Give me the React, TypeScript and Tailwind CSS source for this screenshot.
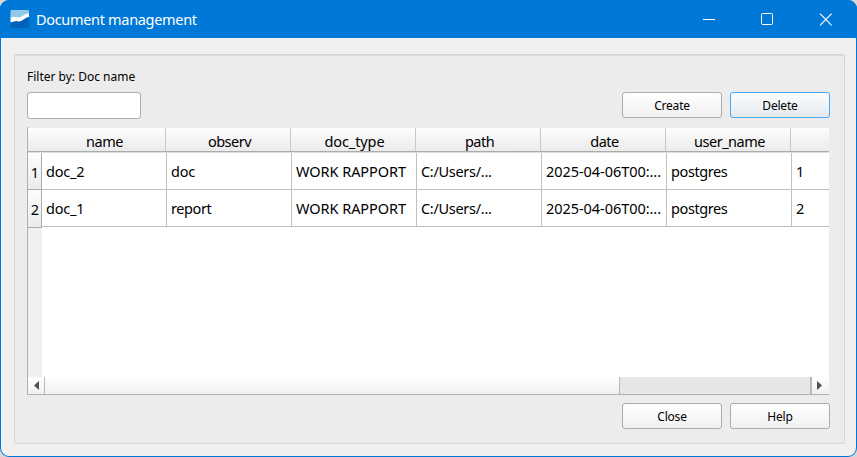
import React from "react";

const columns = ["name", "observ", "doc_type", "path", "date", "user_name"];

const rows = [
  ["doc_2", "doc", "WORK RAPPORT", "C:/Users/...", "2025-04-06T00:...", "postgres", "1"],
  ["doc_1", "report", "WORK RAPPORT", "C:/Users/...", "2025-04-06T00:...", "postgres", "2"],
];

const tracking: Record<string, string> = {
  "WORK RAPPORT": "tracking-[-0.05px]",
  "2025-04-06T00:...": "tracking-[-0.05px]",
  "C:/Users/...": "tracking-[-0.3px]",
  doc_type: "tracking-[-0.1px]",
  doc_2: "tracking-[-0.2px]",
  doc_1: "tracking-[-0.2px]",
  doc: "tracking-[-0.2px]",
};

function DialogButton({ label, active = false }: { label: string; active?: boolean }) {
  return (
    <button
      className={`h-[26px] w-[100px] rounded-[3px] border pt-px text-center text-[12px] leading-[24px] tracking-[-0.2px] text-black ${
        active
          ? "border-[#45a9f7] bg-linear-to-b from-[#fdfdfd] to-[#e2e9ef]"
          : "border-[#adadad] bg-linear-to-b from-white to-[#f0f0f0]"
      }`}
    >
      {label}
    </button>
  );
}

function TitleBar() {
  return (
    <header className="flex h-[38px] shrink-0 items-center bg-[#0078d7] pl-[10px] text-white">
      <svg width="19" height="18" viewBox="0 0 19 18" className="mb-[1px]">
        <rect x="0.5" width="18.5" height="18" rx="1" fill="#0063b9" />
        <path d="M1.5 0H18Q19 0 19 1V6H0.5V12V1Q0.5 0 1.5 0Z" fill="#91c9e9" />
        <path d="M0.5 5H19V6L10 9L0.5 8Z" fill="#91c9e9" />
        <path d="M0.5 7.5Q4 6.3 7 7.3C11 8.3 13 4 19 3.2V7C15 7.5 13 11 9 11.5Q6 10.5 4 11.5Q2 12.5 0.5 12Z" fill="#fff" />
      </svg>
      <h1 className="ml-[7px] text-[14.5px] leading-[20px] tracking-[-0.32px]">Document management</h1>
      <div className="mr-[25px] ml-auto flex items-center">
        <svg width="12" height="13" viewBox="0 0 12 13" fill="none" stroke="white">
          <path d="M0 6.5H12" />
        </svg>
        <svg width="12" height="12" viewBox="0 0 12 12" fill="none" stroke="white" className="ml-[46px]">
          <rect x="0.5" y="0.5" width="11" height="11" rx="1" />
        </svg>
        <svg width="13" height="13" viewBox="0 0 13 13" fill="none" stroke="white" strokeWidth="1.1" className="ml-[46px]">
          <path d="M1 0.7L12.6 12.3M12.6 0.7L1 12.3" />
        </svg>
      </div>
    </header>
  );
}

function DocumentTable() {
  return (
    <div className="flex h-[268px] w-[802px] flex-col overflow-hidden border-b border-l border-[#b0b0b0] bg-white pt-px text-[14.5px] text-black shadow-[inset_0_1px_0_#ececec]">
      <div className="flex h-[24px] shrink-0 border-b border-[#ababab] bg-linear-to-b from-[#fdfdfd] to-[#ebebeb]">
        <div className="w-[13px] shrink-0" />
        {columns.map((column) => (
          <div
            key={column}
            className={`h-[23px] w-[125px] shrink-0 border-r border-[#c8c8c8] pl-[3px] text-center leading-[27px] ${tracking[column] ?? "tracking-[-0.5px]"}`}
          >
            {column}
          </div>
        ))}
      </div>
      <div className="h-px shrink-0 bg-[#dedede]" />
      <div className="flex h-[224px] shrink-0">
        <div className="w-[14px] shrink-0 bg-[#f0f0f0]">
          {rows.map((row, index) => (
            <div
              key={row[0]}
              className={`${index === 0 ? "h-[37px]" : "h-[38px]"} border-r border-b border-[#ababab] bg-linear-to-b from-[#fdfdfd] to-[#ebebeb] pl-px text-center leading-[39px]`}
            >
              {index + 1}
            </div>
          ))}
        </div>
        <div className="grow overflow-hidden">
          {rows.map((row) => (
            <div key={row[0]} className="flex h-[37px] border-b border-[#c0c0c0]">
              {row.map((cell, index) => (
                <div
                  key={index}
                  className={`h-[36px] w-[125px] shrink-0 border-r border-[#c0c0c0] pl-[4px] leading-[37px] whitespace-nowrap ${tracking[cell] ?? "tracking-[-0.4px]"}`}
                >
                  {cell}
                </div>
              ))}
            </div>
          ))}
        </div>
      </div>
      <div className="flex h-[17px] shrink-0 bg-[#e6e6e6]">
        <div className="flex w-[17px] items-center justify-center border-r border-[#b8b8b8] bg-linear-to-b from-white to-[#f0f0f0]">
          <svg width="5" height="9" viewBox="0 0 5 9"><path d="M5 0V9L0 4.5Z" fill="#505050" /></svg>
        </div>
        <div className="w-[575px] border-r border-[#b8b8b8] bg-linear-to-b from-white to-[#f0f0f0]" />
        <div className="grow" />
        <div className="flex w-[19px] items-center border-l-2 border-[#b8b8b8] bg-linear-to-b from-white to-[#f0f0f0] pl-[5px]">
          <svg width="5" height="9" viewBox="0 0 5 9"><path d="M0 0V9L5 4.5Z" fill="#505050" /></svg>
        </div>
      </div>
    </div>
  );
}

export default function App() {
  return (
    <div className="h-[457px] w-[857px] overflow-hidden bg-[#d8d8d8] font-['Noto_Sans',sans-serif]">
      <main className="flex h-full flex-col overflow-hidden rounded-[9px] bg-[#0078d7]">
        <TitleBar />
        <div className="mx-px mb-px grow rounded-b-[8px] bg-[#f0f0f0] px-[13px] pt-[16px]">
          <section className="h-[390px] w-[831px] rounded-[2px] border border-[#d6d6d6] bg-[#ececec] pt-[13px] pl-[12px] shadow-[inset_0_1px_0_#dedede]">
            <label htmlFor="filter" className="block h-[17px] text-[12px] leading-[17px] text-black">
              Filter by: Doc name
            </label>
            <div className="mt-[7px] flex h-[27px] w-[803px] items-start gap-[8px]">
              <input id="filter" className="mr-auto h-[27px] w-[114px] rounded-[3px] border border-[#adadad] bg-white px-1 text-[12px] outline-none" />
              <DialogButton label="Create" />
              <DialogButton label="Delete" active />
            </div>
            <div className="mt-[8px]">
              <DocumentTable />
            </div>
            <div className="mt-[8px] flex w-[803px] justify-end gap-[8px]">
              <DialogButton label="Close" />
              <DialogButton label="Help" />
            </div>
          </section>
        </div>
      </main>
    </div>
  );
}
